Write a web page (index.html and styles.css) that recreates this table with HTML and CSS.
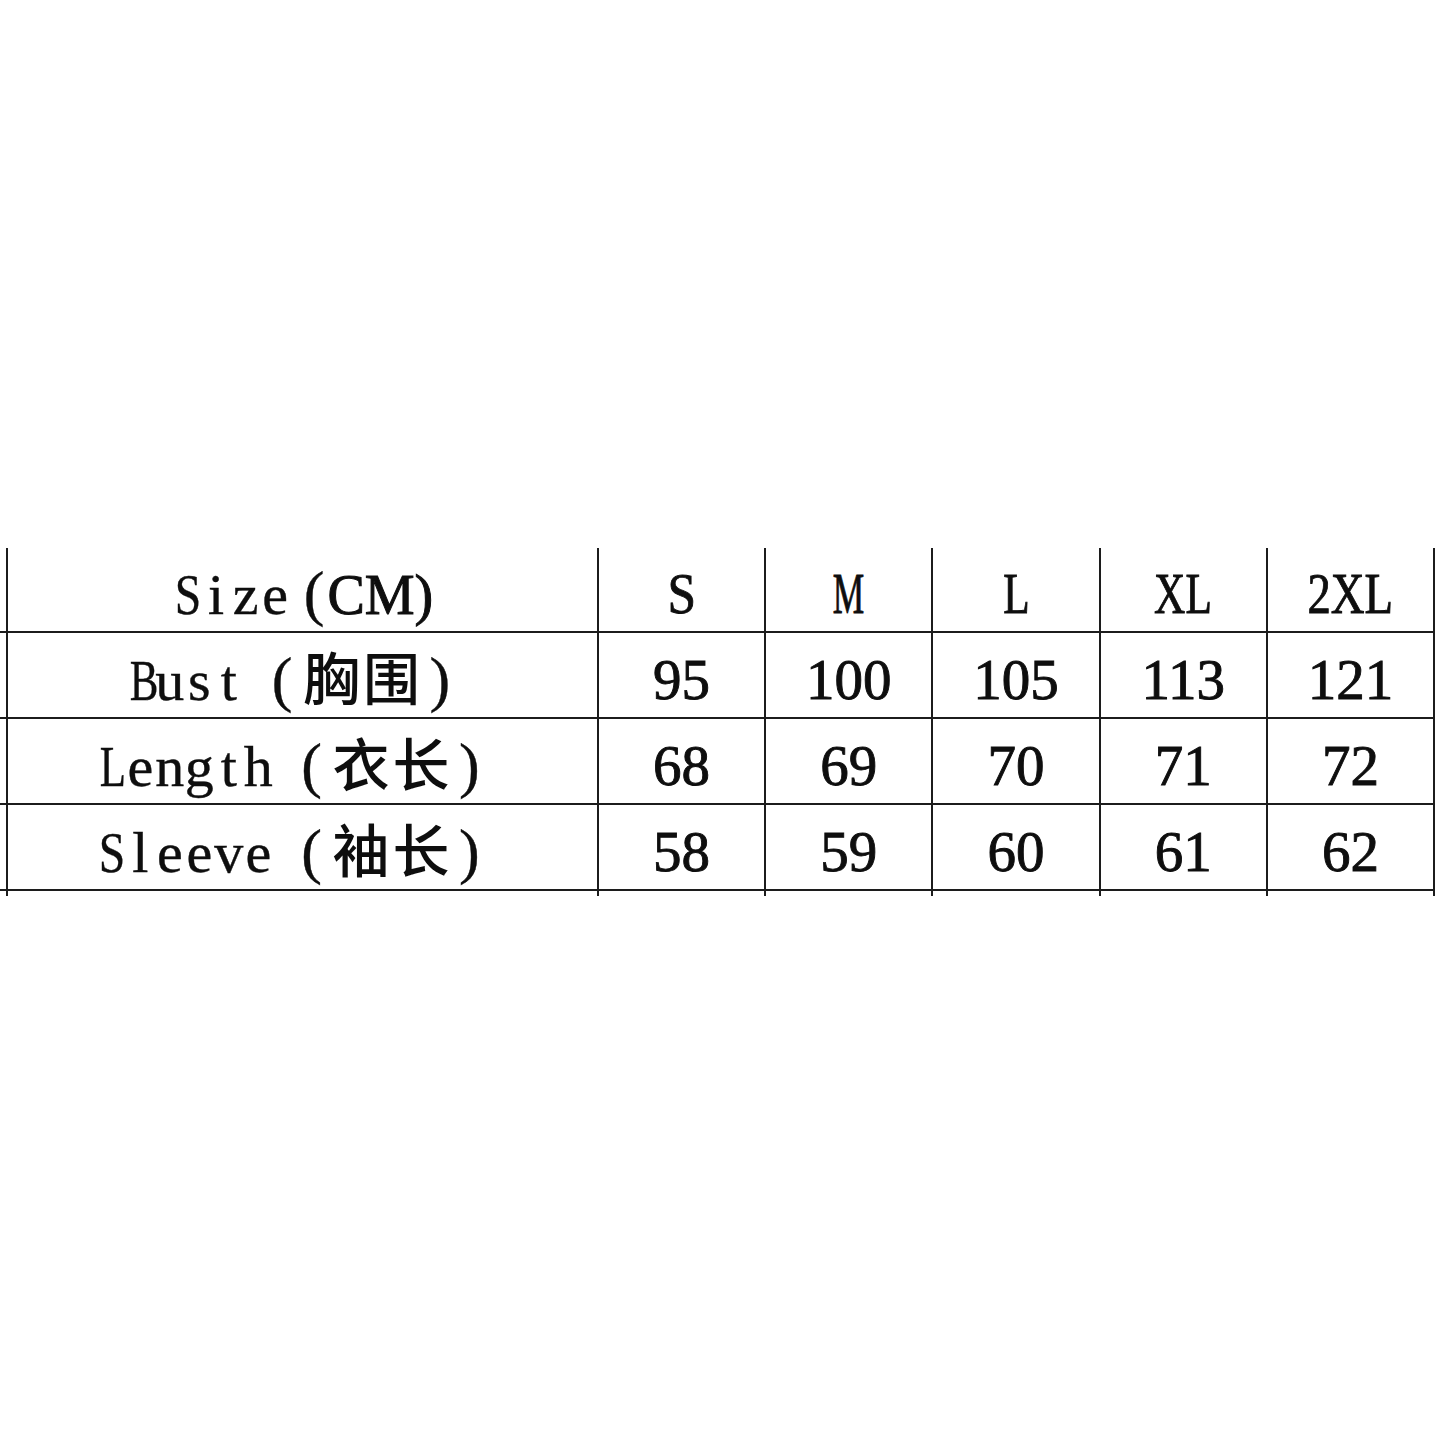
FILE: index.html
```html
<!DOCTYPE html>
<html lang="zh-CN">
<head>
<meta charset="utf-8">
<title>Size chart</title>
<link rel="stylesheet" href="styles.css">
</head>
<body>
<div class="sheet">
  <div class="row head">
    <div class="cell label"><span class="txt"><span class="hw sq">S</span><span class="hw">i</span><span class="hw">z</span><span class="hw">e</span><span class="par-s">(</span><span class="cm">CM)</span></span></div>
    <div class="cell val"><span class="num"><span class="g gs">S</span></span></div>
    <div class="cell val"><span class="num"><span class="g gm">M</span></span></div>
    <div class="cell val"><span class="num"><span class="g gl">L</span></span></div>
    <div class="cell val"><span class="num"><span class="g gxl">XL</span></span></div>
    <div class="cell val"><span class="num"><span class="g g2xl">2XL</span></span></div>
  </div>
  <div class="row">
    <div class="cell label"><span class="txt"><span class="hw sb">B</span><span class="hw">u</span><span class="hw">s</span><span class="hw">t</span><span class="pl">(</span><span class="cjk">胸</span><span class="cjk">围</span><span class="pr">)</span></span></div>
    <div class="cell val"><span class="num">95</span></div>
    <div class="cell val"><span class="num">100</span></div>
    <div class="cell val"><span class="num">105</span></div>
    <div class="cell val"><span class="num">113</span></div>
    <div class="cell val"><span class="num">121</span></div>
  </div>
  <div class="row">
    <div class="cell label"><span class="txt"><span class="hw sb">L</span><span class="hw">e</span><span class="hw">n</span><span class="hw">g</span><span class="hw">t</span><span class="hw">h</span><span class="pl">(</span><span class="cjk">衣</span><span class="cjk">长</span><span class="pr">)</span></span></div>
    <div class="cell val"><span class="num">68</span></div>
    <div class="cell val"><span class="num">69</span></div>
    <div class="cell val"><span class="num">70</span></div>
    <div class="cell val"><span class="num">71</span></div>
    <div class="cell val"><span class="num">72</span></div>
  </div>
  <div class="row">
    <div class="cell label"><span class="txt"><span class="hw sq">S</span><span class="hw">l</span><span class="hw">e</span><span class="hw">e</span><span class="hw">v</span><span class="hw">e</span><span class="pl">(</span><span class="cjk">袖</span><span class="cjk">长</span><span class="pr">)</span></span></div>
    <div class="cell val"><span class="num">58</span></div>
    <div class="cell val"><span class="num">59</span></div>
    <div class="cell val"><span class="num">60</span></div>
    <div class="cell val"><span class="num">61</span></div>
    <div class="cell val"><span class="num">62</span></div>
  </div>
  <div class="row tail">
    <div class="cell label"></div>
    <div class="cell val"></div>
    <div class="cell val"></div>
    <div class="cell val"></div>
    <div class="cell val"></div>
    <div class="cell val"></div>
  </div>
</div>
</body>
</html>
```

FILE: styles.css
```css
html, body {
  margin: 0;
  padding: 0;
  background: #ffffff;
}

.sheet {
  padding-top: 548px;
  color: #0e0e0e;
}

.row {
  display: flex;
  width: 1435px;
  height: 86px;
  box-sizing: border-box;
  padding-left: 6px;
  border-bottom: 2px solid #1c1c1c;
}

.row.head {
  height: 85px;
}

.row.tail {
  height: 5px;
  border-bottom: none;
}

.cell {
  box-sizing: border-box;
  border-left: 2px solid #1c1c1c;
  display: flex;
  align-items: center;
  justify-content: center;
}

.cell:last-child {
  border-right: 2px solid #1c1c1c;
}

.label {
  width: 591px;
  flex: none;
}

.val {
  flex: 1;
}

.txt {
  font-family: "Liberation Serif", "Noto Sans CJK SC", serif;
  font-size: 58px;
  line-height: 1;
  white-space: nowrap;
  padding-top: 6px;
  -webkit-text-stroke: 0.4px #0e0e0e;
}

.hw {
  display: inline-block;
  width: 29.5px;
  text-align: center;
}

.hw.sq {
  transform: scaleX(0.82);
}

.hw.sb {
  transform: scaleX(0.74);
}

.par-s {
  display: inline-block;
  font-size: 62px;
  margin: 0 3px 0 14px;
}

.cm {
  font-size: 56px;
  -webkit-text-stroke: 1px #0e0e0e;
}

.pl {
  display: inline-block;
  width: 58px;
  font-size: 62px;
  text-align: right;
  padding-right: 9px;
  box-sizing: border-box;
}

.pr {
  display: inline-block;
  width: 58px;
  font-size: 62px;
  text-align: left;
  padding-left: 8px;
  box-sizing: border-box;
}

.cjk {
  display: inline-block;
  width: 60px;
  text-align: center;
  font-family: "Noto Sans CJK SC", sans-serif;
  font-size: 57px;
  font-weight: 500;
  -webkit-text-stroke: 0;
}

.num {
  font-family: "Liberation Serif", serif;
  font-size: 57px;
  line-height: 1;
  -webkit-text-stroke: 0.9px #0e0e0e;
  white-space: nowrap;
  padding-top: 8px;
}

.g {
  display: inline-block;
}

.gs { transform: scaleX(0.9); }
.gm { transform: scaleX(0.62); }
.gl { transform: scaleX(0.76); }
.gxl { transform: scaleX(0.76); }
.g2xl { transform: scaleX(0.82); }
```
